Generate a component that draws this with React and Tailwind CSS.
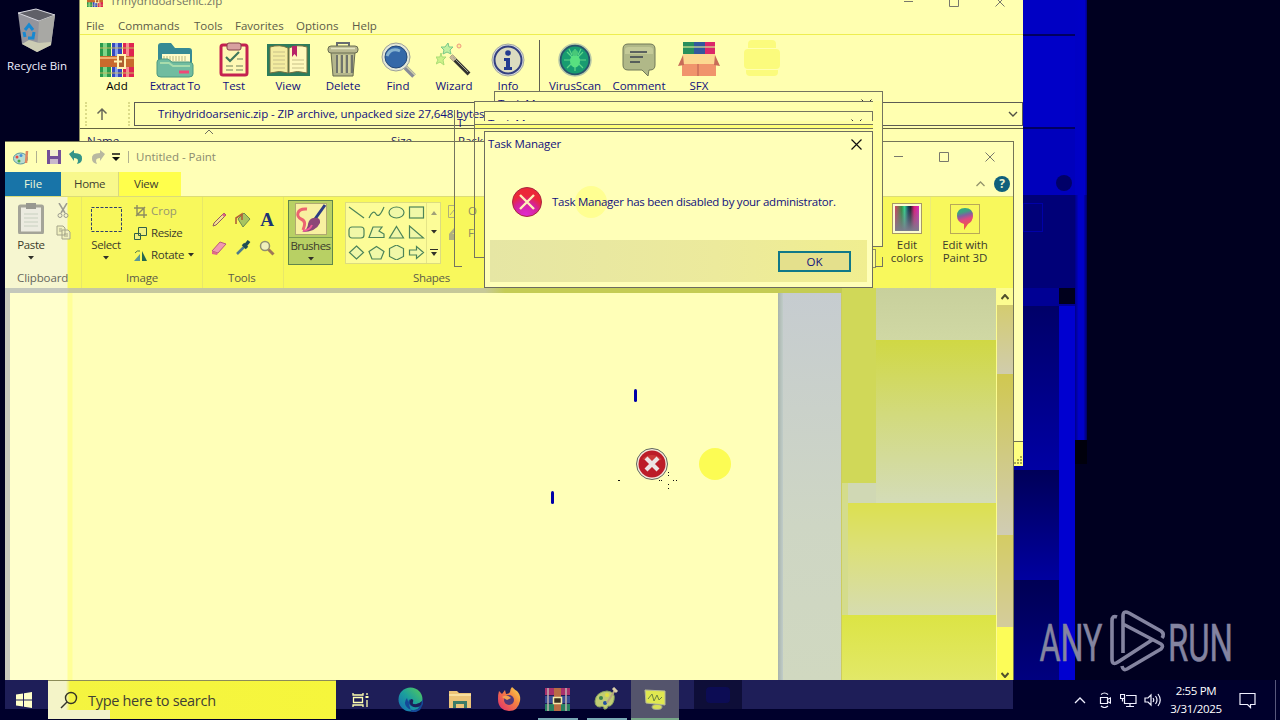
import React from "react";

const Svg = ({ w, h, vb, className = "", children }) => (
  <svg width={w} height={h} viewBox={vb || `0 0 ${w} ${h}`} className={`block shrink-0 ${className}`} fill="none">
    {children}
  </svg>
);

/* ---------- WinRAR icons ---------- */
const Books = ({ s = 34 }) => (
  <Svg w={s} h={s} vb="0 0 34 34">
    <rect x="0" y="0" width="11" height="34" fill="#2a9a4c" />
    <rect x="12" y="0" width="10" height="34" fill="#3448c0" />
    <rect x="23" y="0" width="11" height="34" fill="#e02450" />
    <rect x="3" y="0" width="4" height="34" fill="#7fd688" />
    <rect x="15" y="0" width="3" height="34" fill="#86a0e8" />
    <rect x="26" y="0" width="3" height="34" fill="#f58a90" />
    <path d="M0 5h34M0 30h34" stroke="#c8b860" strokeWidth="1.200" />
    <rect x="0" y="13" width="34" height="11" fill="#c86a2c" />
    <path d="M0 15h34" stroke="#f0b070" strokeWidth="2" />
    <rect x="18" y="12" width="7" height="13" fill="#b06030" stroke="#fff4b0" strokeWidth="2" />
    <path d="M14 18.500h8" stroke="#fff4b0" strokeWidth="2" />
  </Svg>
);
const Folder = () => (
  <Svg w={38} h={36}>
    <path d="M2 4q0-3 3-3h10l4 5h14q3 0 3 3v18H2z" fill="#368a94" />
    <path d="M6 12h28v12H6z" fill="#fffcc8" />
    <path d="M8 14v5m3-5v5m3-5v5m3-5v5m3-5v5m3-5v5m3-5v5m3-5v5" stroke="#b8b880" />
    <path d="M1 20q0-3 4-3h7l4 3h17q4 0 4 3v9q0 3-4 3H5q-4 0-4-3z" fill="#70bca0" stroke="#4c9880" />
    <path d="M4 21h9l4 3h17" stroke="#a8dcac" strokeWidth="2" />
    <path d="M23 30h10" stroke="#f04878" strokeWidth="3" />
  </Svg>
);
const Clipboard = () => (
  <Svg w={30} h={35}>
    <rect x="2" y="3" width="26" height="30" rx="2" fill="#fff8b4" stroke="#c42050" strokeWidth="3" />
    <rect x="8" y="1" width="14" height="7" rx="2" fill="#d8a0a0" stroke="#804048" />
    <path d="M7 15l4 4 9-9" stroke="#40785c" strokeWidth="2.200" />
    <path d="M7 24h7m3 0h7M7 28h7m3 0h7M18 17h6" stroke="#a0a878" strokeWidth="1.500" />
  </Svg>
);
const Book = () => (
  <Svg w={43} h={34}>
    <rect x="0" y="1" width="43" height="32" fill="#2c7c5c" />
    <path d="M3 4q10-3 18 1v25q-8-3-18 0z" fill="#f4eca0" stroke="#787040" />
    <path d="M40 4q-10-3-18 1v25q8-3 18 0z" fill="#fff8bc" stroke="#787040" />
    <path d="M6 9h12M6 13h12M6 17h12M6 21h12M6 25h12M25 17h12M25 21h12M25 25h12" stroke="#c8c088" />
    <path d="M25 3h5v11l-2.500-3-2.500 3z" fill="#b82468" />
  </Svg>
);
const Trash = () => (
  <Svg w={32} h={36}>
    <path d="M10 4V1h12v3" stroke="#686c70" strokeWidth="2" />
    <path d="M4 10h24l-2 24H6z" fill="#b4b68c" stroke="#686c50" />
    <path d="M10 13v18M15 13v18M20 13v18M25 13v18" stroke="#70746c" strokeWidth="2" />
    <path d="M12 13v18M17 13v18M22 13v18" stroke="#eeecb0" />
    <rect x="1" y="4" width="30" height="7" rx="3" fill="#b8b890" stroke="#686c50" />
    <path d="M4 6.500h24" stroke="#e4e4c0" strokeWidth="1.500" />
  </Svg>
);
const Lens = () => (
  <Svg w={36} h={36}>
    <path d="M24 24l10 10" stroke="#888c98" strokeWidth="5" />
    <path d="M25 23l10 10" stroke="#d0d0a8" strokeWidth="1.500" />
    <circle cx="16" cy="15" r="14" fill="#e4e8d8" stroke="#9ca098" />
    <circle cx="16" cy="15" r="11" fill="#3468a8" stroke="#244878" />
    <path d="M7 14q4-9 13-5" stroke="#88b4d0" strokeWidth="3" />
  </Svg>
);
const Wand = () => (
  <Svg w={36} h={36}>
    <path d="M15 14l18 18" stroke="#343430" strokeWidth="4" />
    <path d="M15 14l4 4" stroke="#c8b898" strokeWidth="4" />
    <path d="M17 15l15 15" stroke="#a8a898" />
    <path d="M12 1l1 4 4 0-3 3 1 4-4-2-4 2 1-4-3-3h4z" fill="#c0f0a0" stroke="#78c888" />
    <path d="M5 11l1 4h4l-3 3 1 5-4-3-4 2 2-4-2-3h4z" fill="#ccf288" stroke="#a8dc74" />
    <circle cx="23" cy="4" r="2" fill="#fff090" stroke="#f09880" />
  </Svg>
);
const InfoIcon = () => (
  <Svg w={34} h={34}>
    <circle cx="17" cy="17" r="16" fill="#d8dce0" stroke="#a4a8a0" />
    <circle cx="17" cy="17" r="13.500" fill="#dcdcc0" stroke="#344080" strokeWidth="2" />
    <circle cx="17" cy="10" r="2.800" fill="#243c90" />
    <path d="M13 15h6v9h2v3h-8v-3h2v-6h-2z" fill="#243c90" />
  </Svg>
);
const Virus = () => (
  <Svg w={34} h={34}>
    <circle cx="17" cy="17" r="16" fill="#28546c" stroke="#b8c8a8" strokeWidth="1.500" />
    <circle cx="17" cy="17" r="13.500" fill="#189c70" />
    <path d="M17 6v22M6 17h22M9 9l16 16M25 9L9 25M11 6l3 6M23 6l-3 6" stroke="#60d888" strokeWidth="1.200" />
    <ellipse cx="17" cy="18" rx="5" ry="6.500" fill="#58e080" />
    <circle cx="17" cy="10" r="3" fill="#48c878" />
  </Svg>
);
const CommentIcon = () => (
  <Svg w={34} h={34}>
    <path d="M6 1h22q5 0 5 5v16q0 5-5 5h-1l-1 6-6-6H6q-5 0-5-5V6q0-5 5-5z" fill="#b0b888" stroke="#707858" />
    <path d="M3 7q0-3 4-3h20q4 0 4 3v4H3z" fill="#c4ca98" />
    <path d="M8 9h17M8 14h13M8 19h10" stroke="#38404c" strokeWidth="1.600" />
  </Svg>
);
const Sfx = () => (
  <Svg w={42} h={35}>
    <rect x="5" y="0" width="11" height="15" fill="#28905c" />
    <rect x="16" y="0" width="11" height="15" fill="#34589c" />
    <rect x="27" y="0" width="10" height="15" fill="#dc2868" />
    <path d="M5 5h32" stroke="#d8e890" strokeWidth="1.200" />
    <path d="M4 17h34v17H4z" fill="#f0946c" />
    <path d="M5 12h32l1 10H4z" fill="#fcd890" />
    <path d="M5 13L0 24l6-1zM37 13l5 11-6-1z" fill="#c86c58" />
    <path d="M20 22v12" stroke="#b85c50" />
  </Svg>
);

const toolbar = [
  ["Add", "w-[58px]", <Books />, "text-black"],
  ["Extract To", "w-[58px]", <Folder />, "tracking-[-0.3px]"],
  ["Test", "w-[60px]", <Clipboard />],
  ["View", "w-[48px]", <Book />],
  ["Delete", "w-[62px]", <Trash />],
  ["Find", "w-[48px]", <Lens />],
  ["Wizard", "w-[64px]", <Wand />],
  ["Info", "w-[44px]", <InfoIcon />],
  null,
  ["VirusScan", "w-[70px]", <Virus />],
  ["Comment", "w-[58px]", <CommentIcon />],
  ["SFX", "w-[62px]", <Sfx />],
];

const Controls = ({ className = "" }) => (
  <Svg w={104} h={12} className={className}>
    <path d="M1 5.500h9M46.500 1.500h9v9h-9zM92.500 1.500l9 9M101.500 1.500l-9 9" stroke="#78786c" />
  </Svg>
);

function WinRar() {
  return (
    <section className="absolute left-[79px] top-[-10px] flex h-[476px] w-[944px] flex-col border-l border-[#8c8c60] bg-[#ffffb0]">
      <div className="flex h-[25px] shrink-0 items-start pl-[7px] pt-[3px] text-[#747464]">
        <div className="-mt-0.5"><Books s={16} /></div>
        <span className="ml-[7px]">Trihydridoarsenic.zip</span>
        <Controls className="ml-auto mr-[16px] mt-[3px]" />
      </div>
      <nav className="flex h-5 shrink-0 items-center border-b border-[#eeee50] pl-[6px] pt-0.5 text-[#5c5c48]">
        <span className="w-8">File</span>
        <span className="w-[76px]">Commands</span>
        <span className="w-[41px]">Tools</span>
        <span className="w-[61px]">Favorites</span>
        <span className="w-[56px]">Options</span>
        <span>Help</span>
      </nav>
      <div className="flex h-[65px] shrink-0 pl-2 pt-[5px] text-[#10107c]">
        {toolbar.map((t, i) =>
          t ? (
            <div key={i} className={`flex flex-col items-center whitespace-nowrap ${t[1]} ${t[3] || ""}`}>
              <div className="flex h-[39px] w-11 items-center justify-center">{t[2]}</div>
              <span className="leading-[14px]">{t[0]}</span>
            </div>
          ) : (
            <div key={i} className="ml-[9px] h-[52px] w-px bg-[#606050]" />
          )
        )}
        <div className="ml-3 flex h-[36px] w-10 flex-col items-center justify-center gap-px opacity-45">
          <div className="h-2 w-7 rounded-t bg-[#f8f840]" />
          <div className="h-5 w-9 rounded bg-[#f8f840]" />
          <div className="h-1.5 w-8 rounded-b bg-[#f8f840]" />
        </div>
      </div>
      <div className="flex h-[29px] shrink-0 items-center border-b border-[#646440] pl-[5px]">
        <div className="flex h-6 w-[45px] items-center border-x-2 border-dotted border-[#dcdc88] pl-2">
          <Svg w={14} h={14}><path d="M7 13V2M2.500 6.500L7 2l4.500 4.500" stroke="#686858" strokeWidth="1.500" /></Svg>
        </div>
        <div className="ml-[4px] flex h-[24px] w-[889px] items-center justify-between border border-[#5c5c54] pl-[23px] pr-1 text-[#10107c]">
          <span className="tracking-[-0.1px]">Trihydridoarsenic.zip - ZIP archive, unpacked size 27,648 bytes</span>
          <Svg w={10} h={6}><path d="M1 1l4 4 4-4" stroke="#505044" strokeWidth="1.400" /></Svg>
        </div>
      </div>
      <div className="flex pl-[7px] pt-[5px] leading-[14px] text-[#202060]">
        <span className="w-[118px]">Name</span>
        <Svg w={8} h={5} className="-mt-1"><path d="M0 4l4-4 4 4" stroke="#707060" /></Svg>
        <span className="ml-[178px]">Size</span>
        <span className="ml-[46px]">Packed</span>
      </div>
      <div className="mt-auto flex h-[25px] items-end justify-end border-t border-[#707050] bg-[#ffff80]">
        <Svg w={10} h={12}><path d="M8 2v8M5 5v5M2 8v2" stroke="#a8a850" strokeWidth="2" strokeDasharray="2 1" /></Svg>
      </div>
    </section>
  );
}

/* ---------- Paint ---------- */
const Down = ({ c = "#303028" }) => (
  <Svg w={6} h={4}><path d="M0 0h6L3 3.500z" fill={c} /></Svg>
);
const PaletteIcon = () => (
  <Svg w={17} h={15}>
    <ellipse cx="7.500" cy="8.500" rx="7" ry="5.500" fill="#b8dcd0" stroke="#5c98a0" />
    <circle cx="4" cy="7" r="1.500" fill="#e84840" /><circle cx="8" cy="5.500" r="1.500" fill="#4890d8" /><circle cx="6" cy="11" r="1.500" fill="#48a848" />
    <path d="M14 1l-1 12" stroke="#e08860" strokeWidth="2.500" />
  </Svg>
);
const sh = { stroke: "#4c8458", strokeWidth: 1.2, fill: "#f0f8a8" };
const shapes = [
  <path d="M1 2l15 11" {...sh} />,
  <path d="M1 13q4-9 7-4t8-7" {...sh} fill="none" />,
  <ellipse cx="8.500" cy="7.500" rx="7.500" ry="5.500" {...sh} />,
  <rect x="1.500" y="2" width="14" height="11" {...sh} />,
  <rect x="1" y="2" width="15" height="11" rx="3" {...sh} />,
  <path d="M1 12.500L5 2h9l-3 4 5 3v3.500z" {...sh} />,
  <path d="M8.500 1.500l7 11.500h-14z" {...sh} />,
  <path d="M1.500 1v12h14z" {...sh} />,
  <path d="M8.500 1l7 6.500-7 6.500-7-6.500z" {...sh} />,
  <path d="M8.500 1.500l7.500 5-3 7.500H4L1 6.500z" {...sh} />,
  <path d="M8.500 0l7 3.500v8l-7 3.500-7-3.500V3.500z" {...sh} />,
  <path d="M1.500 5h7V1.500l7 6-7 6V10h-7z" {...sh} />,
];
const tools = [
  <Svg w={18} h={18}><path d="M3 15l1-3L14 2l2 2L6 14z" fill="#f4e090" stroke="#905c60" /><path d="M13 3l2 2" stroke="#e06080" strokeWidth="2.500" /></Svg>,
  <Svg w={18} h={18}><path d="M4 8l6-6 6 6-7 8z" fill="#a8c460" stroke="#6c8c50" /><path d="M2 13V7l6-4v6" stroke="#b06038" strokeWidth="1.600" /></Svg>,
  <span className="font-['Liberation_Serif',serif] text-[19px] font-bold leading-[18px] text-[#1c3474]">A</span>,
  <Svg w={18} h={18}><path d="M2 12l8-9 6 2-8 9z" fill="#f098b0" stroke="#b85c7c" /><path d="M2 12l6 2-1 2-5-1z" fill="#e06888" /></Svg>,
  <Svg w={18} h={18}><path d="M3 15l8-8" stroke="#507c8c" strokeWidth="2.500" /><path d="M9 5l4 4M11 7l4-5" stroke="#204c54" strokeWidth="3.500" /></Svg>,
  <Svg w={18} h={18}><circle cx="7" cy="7" r="4.500" fill="#f0f0bc" stroke="#909070" strokeWidth="1.500" /><path d="M10.500 10.500l5 5" stroke="#a07858" strokeWidth="3" /></Svg>,
];

function Ribbon() {
  return (
    <div className="flex h-[92px] shrink-0 border-t border-[#dcdc78] bg-[#f8f85c] text-[#3c3c2c]">
      <div className="relative flex w-[76px] bg-[linear-gradient(90deg,#f6f6d0_62px,#f8f85c_63px)]">
        <div className="flex w-[52px] flex-col items-center pt-[6px]">
          <Svg w={26} h={31}>
            <rect x="1.500" y="3" width="23" height="27" rx="1" fill="#ecebe0" stroke="#a4a498" strokeWidth="3" />
            <rect x="8" y="0" width="10" height="6" fill="#989890" />
            <path d="M6 11h14M6 15h14M6 19h14M6 23h14" stroke="#c8d0c0" />
          </Svg>
          <span className="mt-[3px] leading-4 tracking-[-0.4px]">Paste</span>
          <div className="mt-[3px]"><Down /></div>
        </div>
        <div className="flex w-3 flex-col items-center gap-1.5 pt-[6px]">
          <Svg w={12} h={16}><path d="M2 0l6 10M10 0L4 10" stroke="#9c9c90" strokeWidth="1.500" /><circle cx="3" cy="12.500" r="2" stroke="#9c9c90" /><circle cx="9" cy="12.500" r="2" stroke="#9c9c90" /></Svg>
          <Svg w={15} h={15}><path d="M1 1h6l2 2v7H1zM6 5h6l2 2v7H6z" fill="#f0f0c0" stroke="#a4a488" /><path d="M3 4h3M3 6h3M8 9h4M8 11h4" stroke="#a4a488" /></Svg>
        </div>
        <span className="absolute bottom-[2px] left-[12px] tracking-[-0.1px] text-[#66665c]">Clipboard</span>
      </div>
      <div className="relative flex w-[122px] border-x border-[#e8e868]">
        <div className="flex w-[52px] flex-col items-center pr-2.5 pl-2.5 pt-[10px]">
          <Svg w={31} h={25} className="-ml-1"><rect x="0.500" y="0.500" width="30" height="24" stroke="#30406c" strokeDasharray="3 1.500" /></Svg>
          <span className="-ml-1 mt-[5px] leading-4 tracking-[-0.4px]">Select</span>
          <div className="-ml-1 mt-[3px]"><Down /></div>
        </div>
        <div className="flex flex-col pt-[3px] leading-[22px]">
          <div className="flex items-center gap-1 text-[#969670]">
            <Svg w={13} h={13}><path d="M3 0v10h10M0 3h10v10M2 11l9-9" stroke="#8c8c60" strokeWidth="1.400" /></Svg>Crop
          </div>
          <div className="flex items-center gap-1 tracking-[-0.4px]">
            <Svg w={13} h={13}><path d="M4.500 .500h8v8h-8zM.500 6.500h6v6h-6z" fill="#f0f080" stroke="#306048" /></Svg>Resize
          </div>
          <div className="flex items-center gap-1 tracking-[-0.3px]">
            <Svg w={13} h={13}><path d="M0 12l6-7v7z" fill="#5c9898" /><path d="M8 2l5 10H8z" fill="#246850" /><path d="M1 4q2-3 5-2" stroke="#507848" /></Svg>Rotate <Down />
          </div>
        </div>
        <span className="absolute bottom-[2px] left-[44px] tracking-[-0.2px] text-[#5c5c48]">Image</span>
      </div>
      <div className="relative w-[81px] border-r border-[#e8e868]">
        <div className="grid grid-cols-[24px_24px_24px] gap-y-[10px] pl-[4px] pt-[14px]">
          {tools.map((t, i) => <div key={i} className="flex h-[18px] justify-center">{t}</div>)}
        </div>
        <span className="absolute bottom-[2px] left-[25px] tracking-[-0.2px] text-[#5c5c48]">Tools</span>
      </div>
      <div className="flex w-[55px] pl-[4px] pt-[3px]">
        <div className="flex h-[65px] w-[45px] flex-col items-center border border-[#60864c] bg-[#b8d064]">
          <div className="flex h-[37px] w-full justify-center border-b border-[#7c9c50] pt-[2px]">
            <Svg w={32} h={32}>
              <rect x=".500" y=".500" width="31" height="31" fill="#f8f0a0" stroke="#b0a870" />
              <path d="M12 6C1 5 1 14 6 16s4 6 2 11" stroke="#ec6470" strokeWidth="3" />
              <path d="M30 2L20 16" stroke="#2c3c84" strokeWidth="3" />
              <path d="M18 15q8-1 7 5-4 9-18 9 6-3 6-8 1-5 5-6z" fill="#8c4478" />
              <path d="M8 28q7-1 9-6" stroke="#f05898" strokeWidth="2" />
            </Svg>
          </div>
          <span className="leading-4 tracking-[-0.5px]">Brushes</span>
          <div className="mt-[3px]"><Down /></div>
        </div>
      </div>
      <div className="relative flex w-[150px] pl-[6px] pt-[5px]">
        <div className="flex h-[62px] w-[96px] border border-[#dcdc80] bg-[#fcfc98]">
          <div className="grid w-[80px] grid-cols-4 pt-[2px]">
            {shapes.map((s, i) => <div key={i} className="flex h-[20px] justify-center"><Svg w={17} h={15}>{s}</Svg></div>)}
          </div>
          <div className="flex w-[14px] flex-col items-center justify-around border-l border-[#e4e488]">
            <Svg w={6} h={4}><path d="M3 0l3 4H0z" fill="#a0a078" /></Svg><Down />
            <Svg w={8} h={7}><path d="M0 .500h8" stroke="#303028" /><path d="M1 3h6L4 7z" fill="#303028" /></Svg>
          </div>
        </div>
        <div className="flex flex-col gap-2 pl-[7px] pt-0.5 text-[#8c8c60]">
          <div className="flex items-center gap-1.5 leading-[14px]"><Svg w={14} h={13}><path d="M7 .500H.500v12H7M2 10l4-5" stroke="#b0b078" /></Svg>O</div>
          <div className="flex items-center gap-1.5 leading-[14px]"><Svg w={14} h={13}><path d="M1 7l5-6v5l-2 1h3v6H1z" fill="#b0b080" /></Svg>F</div>
        </div>
        <span className="absolute bottom-[2px] left-[74px] tracking-[-0.3px] text-[#5c5c48]">Shapes</span>
      </div>
      <div className="ml-auto flex text-center leading-[13px]">
        <div className="flex flex-col gap-1 pr-2 pt-1.5">
          <div className="h-[19px] w-[12px] border-2 border-[#fcfcb0] bg-[#904870] outline outline-[#909060]" />
          <div className="h-[19px] w-[12px] border-2 border-[#fcfcb0] bg-[#d8d8c0] outline outline-[#b8b870]" />
          <div className="h-[19px] w-[12px] border border-[#909060] bg-[#fcfc90]" />
        </div>
        <div className="flex w-[47px] flex-col items-center border-r border-[#ecec78] pt-[7px]">
          <div className="mb-[5px] h-[29px] w-[28px] border-2 border-[#fcfcd0] bg-[linear-gradient(180deg,transparent,#7c7c8c),linear-gradient(90deg,#dc4060,#309040_28%,#30d890_40%,#14405c_55%,#201c2c_65%,#e01878_80%,#d828c0)] outline outline-[#a89868]" />
          <span>Edit<br />colors</span>
        </div>
        <div className="flex w-[68px] flex-col items-center pt-[7px]">
          <div className="mb-1 flex h-[30px] w-[30px] items-center justify-center border border-[#b8a858]">
            <Svg w={18} h={24}>
              <defs><linearGradient id="p3d" x1="0" y1="0" x2=".2" y2="1"><stop offset="0" stopColor="#30b080" /><stop offset=".25" stopColor="#40a080" /><stop offset=".4" stopColor="#8060a0" /><stop offset=".6" stopColor="#e04880" /><stop offset="1" stopColor="#f05840" /></linearGradient></defs>
              <path d="M9 1q8 0 8 8 0 5-5 8l-4 6v-6Q1 15 1 9 1 1 9 1z" fill="url(#p3d)" />
            </Svg>
          </div>
          <span className="tracking-[-0.1px]">Edit with<br />Paint 3D</span>
        </div>
        <div className="w-[14px]" />
      </div>
    </div>
  );
}

function Paint() {
  return (
    <section className="absolute left-[5px] top-[141px] flex h-[539px] w-[1009px] flex-col border-r border-t border-[#747458] bg-[#ffffb6]">
      <header className="flex h-[30px] shrink-0 items-center pl-2 text-[#8c8c70]">
        <PaletteIcon />
        <div className="ml-1.5 h-3 w-px bg-[#b0b090]" />
        <Svg w={14} h={14} className="ml-[10px]"><path d="M0 0h14v14H0z" fill="#745098" /><path d="M3 0h8v6H3z" fill="#f4f0d0" /><path d="M3 9h8v5H3z" fill="#c8b8cc" /></Svg>
        <Svg w={14} h={14} className="ml-2"><path d="M0 4l5-4v3q9 0 8 6 0 4-5 5 3-6-3-6v3z" fill="#349488" /></Svg>
        <Svg w={14} h={14} className="ml-2"><path d="M14 4L9 0v3Q0 3 1 9q0 4 5 5-3-6 3-6v3z" fill="#b8b8a0" /></Svg>
        <Svg w={8} h={8} className="ml-[7px]"><path d="M0 1h8" stroke="#101010" strokeWidth="1.500" /><path d="M0 4h8L4 8z" fill="#101010" /></Svg>
        <div className="ml-2 h-3 w-px bg-[#b0b090]" />
        <span className="ml-[7px]">Untitled - Paint</span>
        <Controls className="ml-auto mr-[16px]" />
      </header>
      <div className="flex h-[24px] shrink-0 items-stretch text-[#404030]">
        <div className="flex w-[56px] items-center justify-center bg-[#1874a8] text-[#f0f8d8]">File</div>
        <div className="flex w-[58px] items-center justify-center border-r border-[#d8d880] bg-[#f8f88c] tracking-[-0.4px]">Home</div>
        <div className="flex w-[62px] items-center pl-[15px] bg-[#ffff4c] tracking-[-0.2px]">View</div>
        <div className="ml-auto flex items-center gap-[9px] pr-[3px]">
          <Svg w={9} h={6}><path d="M.500 5l4-4 4 4" stroke="#94946c" strokeWidth="1.300" /></Svg>
          <div className="flex h-4 w-4 items-center justify-center rounded-full bg-[#10607c] text-[12px] font-bold text-[#e8f0d0]">?</div>
        </div>
      </div>
      <Ribbon />
      <div className="flex min-h-0 flex-1">
        <div className="flex flex-1 flex-col bg-[#cccc60]">
          <div className="h-[5px] shrink-0 bg-[linear-gradient(90deg,#c4c8bc_62px,#c6c8a0_64px,#c6c898_480px,#c4cc54_500px)]" />
          <div className="flex flex-1">
            <div className="w-[5px] bg-[#c8c8bc]" />
            <div className="w-[768px] bg-[linear-gradient(90deg,#ffffcc_57px,#ffff98_58px,#ffff98_62px,#ffffb8_63px)]" />
            <div className="w-[5px] bg-[linear-gradient(90deg,#a8b4ac,#c0ccc8)]" />
            <div className="w-[58px] bg-[linear-gradient(180deg,#c6ccd0,#ced6c4_60%,#d0d8c0)]" />
          </div>
        </div>
        <div className="flex w-[154px] bg-[#d4dc8c]">
          <div className="flex w-[34px] flex-col">
            <div className="h-[195px] bg-[#d0d858]" />
            <div className="ml-1.5 h-[20px] bg-[#d0d8b4]" />
            <div className="ml-1.5 h-[112px] bg-[linear-gradient(180deg,#dce050,#dce078_40%,#d6dcb0)]" />
            <div className="flex-1 bg-[linear-gradient(180deg,#dce444,#e2e868)]" />
          </div>
          <div className="flex flex-1 flex-col">
            <div className="h-[52px] bg-[linear-gradient(180deg,#c8d09c,#d0d8a4)]" />
            <div className="h-[163px] bg-[linear-gradient(180deg,#d0d844,#d2da7c_45%,#d4dcb8)]" />
            <div className="h-[112px] bg-[linear-gradient(180deg,#dce050,#dce078_40%,#d6dcb0)]" />
            <div className="flex-1 bg-[linear-gradient(180deg,#dce444,#e2e868)]" />
          </div>
        </div>
        <div className="flex w-[17px] flex-col items-center border-l border-[#fcfc90] bg-[#fcfc90]">
          <div className="flex h-[17px] items-center"><Svg w={8} h={6}><path d="M.500 5l3.500-4L7.500 5" stroke="#50502c" strokeWidth="2" /></Svg></div>
          <div className="h-[69px] w-full bg-[linear-gradient(180deg,#d4cc70,#d0ccac)]" />
          <div className="h-[161px] w-full bg-[linear-gradient(180deg,#d0c850,#d0ccb4)]" />
          <div className="h-[92px] w-full bg-[linear-gradient(180deg,#d4cc64,#d4cc9c)]" />
          <div className="flex w-full flex-1 items-end justify-center bg-[#fcfc58] pb-[2px]"><Svg w={8} h={6}><path d="M.500 1L4 5l3.500-4" stroke="#50502c" strokeWidth="2" /></Svg></div>
        </div>
      </div>
    </section>
  );
}

/* ---------- Dialog ---------- */
function Dialog() {
  return (
    <section className="absolute left-[484px] top-[131px] flex h-[157px] w-[389px] flex-col border border-[#6c6c60] bg-[#ffffb8] text-[#10107c]">
      <div className="absolute left-[90px] top-[54px] h-8 w-8 rounded-full bg-[#ffff78] opacity-60" />
      <div className="relative flex h-6 items-center justify-between pl-[3px] pr-[10px]">
        <span className="tracking-[-0.15px]">Task Manager</span>
        <Svg w={11} h={11}><path d="M.500.500l10 10M10.500.500l-10 10" stroke="#101010" strokeWidth="1.200" /></Svg>
      </div>
      <div className="relative flex flex-1 items-center pl-[27px] pt-[7px]">
        <Svg w={30} h={30}>
          <defs><radialGradient id="er" cx=".45" cy=".95" r=".9"><stop offset="0" stopColor="#e028d0" /><stop offset=".5" stopColor="#d42498" /><stop offset=".75" stopColor="#ec2838" /></radialGradient></defs>
          <circle cx="15" cy="15" r="14.500" fill="url(#er)" stroke="#a82840" />
          <path d="M8 8l14 14M22 8L8 22" stroke="#fff0b8" strokeWidth="2.400" />
        </Svg>
        <span className="ml-[10px] mt-px whitespace-nowrap tracking-[-0.26px]">Task Manager has been disabled by your administrator.</span>
      </div>
      <div className="mx-[5px] mb-[5px] flex h-[42px] items-center justify-end bg-[linear-gradient(90deg,#e6e6a4,#ecea9c_60%,#f0ee90)] pr-4">
        <button className="h-[21px] w-[73px] border-2 border-[#107888] bg-[#e4e08c] leading-[17px]">OK</button>
      </div>
    </section>
  );
}

/* Window remnants left behind by earlier dialogs */
const Cross = () => (
  <Svg w={11} h={11}><path d="M.500.500l10 10M10.500.500l-10 10" stroke="#303030" /></Svg>
);
function Remnants() {
  return (
    <>
      <div className="absolute left-[454px] top-[110px] h-[157px] w-[20px] border-l border-[#747460]" />
      <div className="absolute left-[454px] top-[110px] h-[157px] w-[8px] border-b border-[#747460]" />
      <div className="absolute left-[474px] top-[101px] h-[157px] w-[10px] border-b border-l border-[#747460]" />
      <div className="absolute left-[873px] top-[91px] h-[156px] w-[10px] border-b border-r border-[#747460] bg-[#ffffa4]" />
      <div className="absolute left-[494px] top-[91px] h-[10px] w-[389px] overflow-hidden border border-b-0 border-[#747460] bg-[#ffffb0] pl-[3px] pr-[10px]">
        <div className="flex items-center justify-between pt-[4px] text-[#10107c]">Task Manager<Cross /></div>
      </div>
      <div className="absolute left-[474px] top-[101px] h-[10px] w-[399px] border-l border-t border-[#747460] bg-[#ffffac]" />
      <div className="absolute left-[484px] top-[111px] h-[10px] w-[389px] overflow-hidden border border-b-0 border-[#747460] bg-[#ffffb0] pl-[3px] pr-[10px]">
        <div className="flex items-center justify-between pt-[4px] text-[#10107c]">Task Manager<Cross /></div>
      </div>
      <div className="absolute left-[475px] top-[121px] h-[10px] w-[398px] bg-[#ffffa4]">
        <div className="mt-[3px] h-[5px] border-y border-[#747460] bg-[#ffff78]" />
      </div>
      <div className="absolute left-[457px] top-[117px] h-[12px] w-2 overflow-hidden leading-[12px] text-[#10107c]">T</div>
      <div className="absolute left-[875px] top-[257px] h-[10px] w-[8px] border-b border-r border-[#747460]" />
    </>
  );
}

/* ---------- Desktop background ---------- */
function Backdrop() {
  return (
    <>
      <div className="absolute left-[1013px] top-0 flex h-[680px] w-[74px]">
        <div className="flex flex-1 flex-col">
          <div className="h-[34px] bg-[#0000c4]" />
          <div className="h-[2px] bg-[#000060]" />
          <div className="h-[91px] bg-[#0000c8]" />
          <div className="h-[2px] bg-[#000060]" />
          <div className="flex h-[66px] items-end justify-end bg-[#0000bc] pb-1 pr-[3px]"><div className="h-4 w-4 rounded-full bg-[#000068]" /></div>
          <div className="flex h-[93px] items-start bg-[#000078] pl-[10px] pt-2"><div className="h-[29px] w-5 border border-[#0000a8]" /></div>
          <div className="flex h-[18px] justify-end bg-[#000094]"><div className="h-4 w-4 bg-[#00001c]" /></div>
          <div className="flex h-[374px]">
            <div className="flex flex-1 flex-col">
              <div className="h-[164px] bg-[linear-gradient(180deg,#000068,#0000a4)]" />
              <div className="h-[110px] bg-[linear-gradient(180deg,#000058,#0000a0)]" />
              <div className="flex-1 bg-[linear-gradient(180deg,#000054,#000080)]" />
            </div>
            <div className="w-[16px] bg-[#0000d0]" />
          </div>
        </div>
        <div className="flex w-[12px] flex-col">
          <div className="h-[195px] bg-[linear-gradient(90deg,#0000c4,#0000c8_80%,#000080)]" />
          <div className="h-[245px] bg-[linear-gradient(90deg,#000088,#0000c8_30%,#0000c8_70%,#000060)]" />
          <div className="h-6 bg-[#00000c]" />
        </div>
      </div>
      <div className="absolute left-[2px] top-[8px] flex w-[70px] flex-col items-center text-[#f0f0ff]">
        <Svg w={40} h={46}>
          <path d="M1 5l18-4 19 6-4 30-14 7L5 36z" fill="#94949c" />
          <path d="M1 5l18-4 19 6-16 6z" fill="#606068" stroke="#d8d8e0" />
          <path d="M22 13l16-6-4 30-14 7z" fill="#a8a8a4" />
          <path d="M5 36l7-4 10 3 12-1v3l-14 7z" fill="#ccccb4" />
          <path d="M8 22l4-5 4 5M17 24l-1 6h-5M7 24l1 5" stroke="#1888d0" strokeWidth="3" />
        </Svg>
        <span className="mt-1 whitespace-nowrap leading-4">Recycle Bin</span>
      </div>
    </>
  );
}

/* ---------- Taskbar ---------- */
const taskIcons = [
  <Svg w={25} h={25}>
    <defs><linearGradient id="edg" x1="0" y1="1" x2="1" y2="0"><stop offset="0" stopColor="#1468b8" /><stop offset=".5" stopColor="#1ca09c" /><stop offset="1" stopColor="#58cc58" /></linearGradient></defs>
    <circle cx="12.500" cy="12.500" r="12" fill="url(#edg)" />
    <path d="M9 11q-5 6 2 11 6 3 11-2-5 1-9-1-4-3-2-6 2-2 2 1 1 4 6 3 5-1 6-5v5l-3 6-8 4" fill="#144898" />
    <path d="M13 12q3 0 2 3-1 2 1 2 4 1 8-3l-1 4q-5 4-9 1-4-3-1-7z" fill="#1c2058" />
  </Svg>,
  <Svg w={24} h={20}><path d="M1 2h8l2 2h12v15H1z" fill="#ecc478" /><path d="M1 6h22" stroke="#f8e0a0" strokeWidth="2" /><path d="M5 19v-7h14v7h-3v-4H8v4z" fill="#3c7c68" /></Svg>,
  <Svg w={24} h={25}>
    <defs><linearGradient id="ffx" x1="0" y1="1" x2="1" y2="0"><stop offset="0" stopColor="#e02870" /><stop offset=".6" stopColor="#f48440" /><stop offset="1" stopColor="#f8e450" /></linearGradient></defs>
    <path d="M2 4l3 3 3-4 1 4q3 0 4-2 0-3 2-5 3 3 5 4 4 4 3 10-2 10-11 10Q1 23 1 12q0-5 1-8z" fill="url(#ffx)" /><circle cx="12" cy="13" r="5" fill="#503878" /><path d="M5 10q5-3 9 1l-4 2z" fill="#f0a050" />
  </Svg>,
  <Svg w={25} h={23}>
    <rect width="25" height="7" fill="#a8306c" /><rect y="8" width="25" height="7" fill="#384c94" /><rect y="16" width="25" height="7" fill="#288060" />
    <path d="M3 0v23M21 0v23" stroke="#c0b0b0" strokeWidth="1.500" /><rect x="9" width="7" height="23" fill="#b86c44" /><rect x="8.500" y="9.500" width="8" height="6" fill="#383020" stroke="#f4e8a8" strokeWidth="1.500" />
  </Svg>,
  <Svg w={25} h={24}><path d="M1 14Q2 5 13 4q9 1 7 9-2 7-6 6-1 4-4 3 0-4-4-2-5 0-5-6z" fill="#c0cc74" stroke="#88a460" /><circle cx="7" cy="11" r="2" fill="#38844c" /><circle cx="11" cy="16" r="2" fill="#2050a0" /><circle cx="13" cy="8" r="2" fill="#e0e040" /><path d="M13 16l8-13" stroke="#b8a880" strokeWidth="2" /><path d="M19 1l4 4" stroke="#dcd0a8" strokeWidth="3" /></Svg>,
  <Svg w={24} h={23}><path d="M2 2l20 1v14l-19-2z" fill="#e0e850" stroke="#b8bc94" /><path d="M5 11l4-5 2 7 3-6 2 5 3-3" stroke="#6c8440" /><ellipse cx="14" cy="19" rx="5" ry="2.500" fill="#d8e058" stroke="#a4a890" /></Svg>,
];

function Taskbar() {
  return (
    <footer className="absolute left-0 top-[680px] flex h-10 w-full bg-[#00002c]">
      <div className="absolute left-[5px] top-0 h-[29px] w-[1008px] bg-[#1e1e58]" />
      <div className="relative flex flex-1">
        <div className="flex w-[48px] items-center justify-center">
          <Svg w={16} h={16}><path d="M0 2.500L7 1.500V7.500H0zM8 1.300L16 0v7.500H8zM0 8.500h7v6l-7-1zM8 8.500h8V16l-8-1.200z" fill="#ffffc8" /></Svg>
        </div>
        <div className="relative mb-px flex w-[288px] items-center border-t border-[#8c8c58] bg-[linear-gradient(90deg,#f4f4c8_18px,#f4f440_22px,#f6f63c)] pl-[12px]">
          <div className="absolute bottom-0 left-0 h-[9px] w-[62px] bg-[#f2f2cc]" />
          <Svg w={18} h={18} className="relative"><circle cx="11" cy="7" r="5.500" stroke="#343428" strokeWidth="1.400" /><path d="M7 11l-6 6" stroke="#343428" strokeWidth="1.400" /></Svg>
          <span className="relative ml-[10px] mt-px whitespace-nowrap text-[14.5px] tracking-[-0.3px] text-[#404034]">Type here to search</span>
        </div>
        <div className="flex w-[48px] items-center justify-center">
          <Svg w={17} h={16}><path d="M1 1v2h10V1M1.500 5.500h9v5h-9zM1 15v-2h10v2M15 1v2M15 8v7" stroke="#ffffb0" strokeWidth="1.300" /><path d="M13.500 5h3" stroke="#ffffb0" strokeWidth="2" /></Svg>
        </div>
        <div className="ml-[2px] flex">
          {taskIcons.map((ic, i) => (
            <div key={i} className={`flex flex-col items-center ${i === 5 ? "w-12 bg-[#54546c]" : "w-[49px]"}`}>
              <div className="flex flex-1 items-center">{ic}</div>
              <div className={`h-[2px] ${i < 3 ? "w-0" : i === 5 ? "w-12 bg-[#78a888]" : "w-10 bg-[#78a8b4]"}`} />
            </div>
          ))}
        </div>
        <div className="ml-[15px] flex h-[29px] w-[48px] items-center justify-center bg-[#0e0e38]">
          <div className="h-4 w-6 rounded bg-[#0c0c54]" />
        </div>
      </div>
      <div className="relative flex items-center text-white">
        <Svg w={12} h={8}><path d="M1 7l5-5 5 5" stroke="#f0f0ff" strokeWidth="1.300" /></Svg>
        <Svg w={12} h={16} className="ml-[13px]"><path d="M1.500 5.500h7v6h-7zM8.500 7.500l3-1.500v5l-3-1.500M2 2.500q3.500-3 7 0M2 14q3.500 3 7 0" stroke="#f0f0ff" strokeWidth="1.200" /></Svg>
        <Svg w={17} h={15} className="ml-[9px]"><path d="M6 2.500h10v8H4.500V6M10 10.500v3M6 13.500h8M.500 1.500h4v4h-4zM2.500 5.500v3" stroke="#f0f0ff" strokeWidth="1.200" /></Svg>
        <Svg w={17} h={14} className="ml-[7px]"><path d="M1 5h3l3-3v10L4 9H1zM9 5q1.500 2 0 4M11.500 3q3 4 0 8M14 1q4.500 6 0 12" stroke="#f0f0ff" strokeWidth="1.200" /></Svg>
        <div className="ml-[7px] w-[56px] text-center leading-[18px] tracking-[-0.35px]">2:55 PM<br />3/31/2025</div>
        <Svg w={17} h={17} className="ml-[15px]"><path d="M1 1.500h15v11h-4.500v3l-3-3H1z" stroke="#f0f0ff" strokeWidth="1.200" /></Svg>
        <div className="ml-[19px] mr-1 h-10 w-px bg-[#58587c]" />
      </div>
    </footer>
  );
}

function Watermark() {
  return (
    <div className="absolute left-[1038px] top-[608px]">
      <Svg w={196} h={66}>
        <g fill="#8484a0" stroke="#8484a0" strokeWidth=".600" fontFamily="Roboto, sans-serif" fontSize="52" fontWeight="400">
          <text x="1.500" y="53" textLength="63" lengthAdjust="spacingAndGlyphs">ANY</text>
          <text x="130" y="53" textLength="65" lengthAdjust="spacingAndGlyphs">RUN</text>
        </g>
        <path d="M79 9q-5-2-5 4v38q0 7 6 3l34-22M85 45V8q0-6 6-3l32 18q4 3 1 7M85 16l38 20q3 2 0 5L89 61q-4 2-5-3" stroke="#8484a0" strokeWidth="3.600" strokeLinejoin="round" />
      </Svg>
    </div>
  );
}

export default function App() {
  return (
    <main className="relative h-[720px] w-[1280px] overflow-hidden bg-[#000020] font-['Open_Sans','Noto_Sans',sans-serif] text-[11.5px] leading-4">
      <Backdrop />
      <WinRar />
      <Paint />
      <Remnants />
      <Dialog />
      <div className="absolute left-[634px] top-[389px] h-[13px] w-[3px] rounded bg-[#0000a8]" />
      <div className="absolute left-[551px] top-[491px] h-[13px] w-[3px] rounded bg-[#0000a8]" />
      <div className="absolute left-[699px] top-[448px] h-8 w-8 rounded-full bg-[#fcfc54]" />
      <div className="absolute left-[618px] top-[447px]">
        <Svg w={62} h={45}>
          <circle cx="34" cy="17" r="15.500" fill="#f4e8dc" stroke="#60685c" />
          <circle cx="34" cy="17" r="13.500" fill="#bc1c28" />
          <path d="M24 12q10-8 20 0-4 4-20 0z" fill="#cc3838" />
          <path d="M28 11l12 12M40 11L28 23" stroke="#ece4e4" strokeWidth="4.200" />
          <path d="M0 33.500h2M41 33.500h1M43 33.500h1M55 33.500h1M58 33.500h1M50 25.500h1M50 28.500h1M50 37.500h1M50 41.500h1" stroke="#101010" />
        </Svg>
      </div>
      <Taskbar />
      <Watermark />
    </main>
  );
}
